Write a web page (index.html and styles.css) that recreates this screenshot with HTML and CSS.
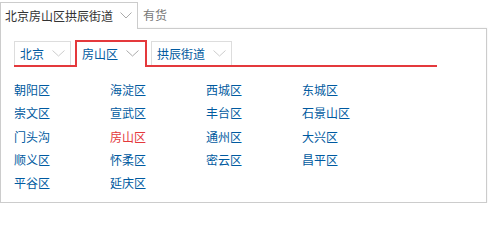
FILE: index.html
```html
<!DOCTYPE html>
<html lang="zh-CN">
<head>
<meta charset="utf-8">
<title>地址选择</title>
<link rel="stylesheet" href="styles.css">
</head>
<body>
<div class="selector">
  <div class="head">
    <div class="trigger">
      <span class="trigger-text">北京房山区拱辰街道</span>
      <svg class="arrow-big" width="12" height="7" viewBox="0 0 12 7"><polyline points="0.5,0.5 6,6 11.5,0.5" fill="none" stroke="#aaa" stroke-width="1"/></svg>
    </div>
    <span class="stock">有货</span>
  </div>
  <div class="panel">
    <div class="tabs">
      <div class="tab"><span>北京</span><svg class="arrow" width="13" height="7" viewBox="0 0 13 7"><polyline points="0.5,0.5 6.5,6 12.5,0.5" fill="none" stroke="#ccc" stroke-width="1"/></svg></div>
      <div class="tab tab-on"><span>房山区</span><svg class="arrow" width="13" height="7" viewBox="0 0 13 7"><polyline points="0.5,0.5 6.5,6 12.5,0.5" fill="none" stroke="#aaa" stroke-width="1"/></svg></div>
      <div class="tab"><span>拱辰街道</span><svg class="arrow" width="13" height="7" viewBox="0 0 13 7"><polyline points="0.5,0.5 6.5,6 12.5,0.5" fill="none" stroke="#ccc" stroke-width="1"/></svg></div>
    </div>
    <ul class="areas">
      <li>朝阳区</li><li>海淀区</li><li>西城区</li><li>东城区</li>
      <li>崇文区</li><li>宣武区</li><li>丰台区</li><li>石景山区</li>
      <li>门头沟</li><li class="cur">房山区</li><li>通州区</li><li>大兴区</li>
      <li>顺义区</li><li>怀柔区</li><li>密云区</li><li>昌平区</li>
      <li>平谷区</li><li>延庆区</li>
    </ul>
  </div>
</div>
</body>
</html>
```
FILE: styles.css
```css
html, body {
  margin: 0;
  padding: 0;
  background: #fff;
}
body {
  font-family: "Noto Sans CJK SC", "Noto Sans", sans-serif;
  font-size: 12px;
  color: #333;
}
.selector {
  width: 488px;
  padding-top: 2px;
}
.head {
  display: flex;
  align-items: flex-start;
}
.trigger {
  position: relative;
  z-index: 2;
  display: flex;
  align-items: center;
  height: 27px;
  padding: 0 5px 0 4px;
  border: 1px solid #ccc;
  border-bottom: 0;
  background: #fff;
  box-sizing: border-box;
}
.trigger-text {
  line-height: 26px;
  margin-top: -1px;
  color: #333;
}
.arrow-big {
  display: block;
  margin-left: 7px;
  margin-top: -1px;
}
.stock {
  margin-left: 5px;
  line-height: 26px;
  color: #777;
}
.panel {
  margin-top: -1px;
  width: 487px;
  height: 175px;
  box-sizing: border-box;
  border: 1px solid #ccc;
  background: #fff;
  box-shadow: 0 0 2px rgba(0, 0, 0, 0.08);
  padding: 11px 0 0 13px;
}
.tabs {
  display: flex;
  align-items: flex-end;
  gap: 4px;
  width: 423px;
  height: 24px;
  border-bottom: 2px solid #e4393c;
  padding-top: 1px;
}
.tab {
  display: flex;
  align-items: center;
  height: 24px;
  box-sizing: border-box;
  padding: 0 5px;
  border: 1px solid #ddd;
  border-bottom: 0;
  color: #005aa0;
}
.tab .arrow {
  display: block;
  margin-left: 8px;
}
.tab-on {
  height: 27px;
  margin-bottom: -2px;
  border: 2px solid #e4393c;
  border-bottom: 0;
  padding: 0 6px 2px 5px;
  background: #fff;
}
.areas {
  list-style: none;
  margin: 0;
  padding: 11px 0 0 0;
  display: grid;
  grid-template-columns: repeat(4, 96px);
  grid-auto-rows: 23.25px;
}
.areas li {
  line-height: 23px;
  color: #005aa0;
  white-space: nowrap;
}
.areas li.cur {
  color: #e4393c;
}
```
